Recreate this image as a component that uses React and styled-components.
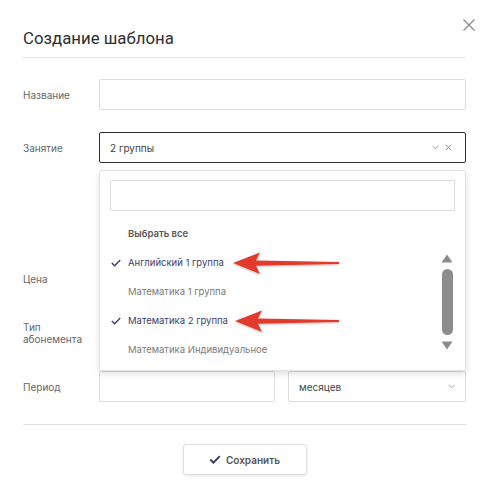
import React from "react";
import styled, { createGlobalStyle } from "styled-components";

const Global = createGlobalStyle`
  html, body { margin: 0; padding: 0; background: #fff; }
  body { font-family: Inter, "Noto Sans", "Liberation Sans", sans-serif; color: #333; }
  * { box-sizing: border-box; }
`;

const Modal = styled.div`
  position: relative;
  width: 495px;
  height: 500px;
  padding: 0 29px 0 23px;
  background: #fff;
`;

const Header = styled.div`
  padding-top: 28px;
  padding-bottom: 8px;
  border-bottom: 1px solid #e3e3e3;
`;

const Title = styled.h1`
  margin: 0;
  font-family: Roboto, "Liberation Sans", sans-serif;
  font-size: 16.8px;
  line-height: 21px;
  font-weight: 400;
  color: #2e2e2e;
`;

const Close = styled.button`
  position: absolute;
  top: 18px;
  right: 19px;
  width: 14px;
  height: 14px;
  padding: 0;
  border: 0;
  background: none;
  display: flex;
`;

const Form = styled.div`
  padding-top: 21px;
`;

const Row = styled.div`
  display: grid;
  grid-template-columns: 76px 1fr;
  align-items: center;
  margin-top: ${(p) => p.$mt || 0}px;
`;

const Label = styled.div`
  font-size: 10px;
  line-height: 12px;
  color: #666;
  padding-right: 14px;
`;

const Input = styled.div`
  height: 31px;
  border: 1px solid #dcdcdc;
  border-radius: 2px;
  background: #fff;
`;

const Select = styled.div`
  position: relative;
  height: 31px;
  border: 1px solid ${(p) => (p.$active ? "#2f2f36" : "#dcdcdc")};
  border-radius: 2px;
  display: flex;
  align-items: center;
  padding: 0 ${(p) => (p.$active ? 13 : 10)}px 0 10px;
  font-size: 10px;
  color: #444;
  background: #fff;
`;

const SelectText = styled.span`
  flex: 1;
`;

const Icons = styled.span`
  display: flex;
  align-items: center;
  gap: 6px;
`;

const Pair = styled.div`
  display: grid;
  grid-template-columns: 176px 1fr;
  gap: 13px;
`;

const Dropdown = styled.div`
  position: absolute;
  z-index: 5;
  top: 37px;
  left: -1px;
  right: -1px;
  height: 201px;
  background: #fff;
  border: 1px solid #e2e2e2;
  border-radius: 2px;
  box-shadow: 0 3px 6px rgba(0, 0, 0, 0.12);
  padding: 9px 10px 0 10px;
`;

const Search = styled.div`
  height: 31px;
  border: 1px solid #dcdcdc;
  border-radius: 1px;
`;

const AllRow = styled.div`
  height: 29px;
  margin-top: 8px;
  padding-left: 18px;
  display: flex;
  align-items: center;
  font-size: 9.5px;
  font-weight: 600;
  color: #555;
`;

const ListWrap = styled.div`
  display: flex;
`;

const Options = styled.div`
  flex: 1;
`;

const Option = styled.div`
  height: 29px;
  display: flex;
  align-items: center;
  font-size: 9.5px;
  color: ${(p) => (p.$on ? "#3b3e6c" : "#7b7b7b")};
`;

const CheckSlot = styled.span`
  width: 18px;
  display: flex;
  align-items: center;
  padding-left: 1px;
`;

const Scroll = styled.div`
  width: 14px;
  margin-right: 1px;
  padding: 6px 0;
  display: flex;
  flex-direction: column;
  align-items: center;
  gap: 6px;
`;

const Thumb = styled.div`
  width: 11px;
  height: 66px;
  border-radius: 6px;
  background: #8c8c8c;
`;

const Arrows = styled.svg`
  position: absolute;
  z-index: 6;
  left: 0;
  top: 0;
  pointer-events: none;
`;

const Divider = styled.div`
  margin-top: 22px;
  border-top: 1px solid #e3e3e3;
`;

const Footer = styled.div`
  display: flex;
  justify-content: center;
  padding-top: 19px;
`;

const SaveButton = styled.button`
  width: 124px;
  height: 31px;
  border: 1px solid #e0e0e0;
  border-radius: 3px;
  background: #fff;
  box-shadow: 0 1px 3px rgba(0, 0, 0, 0.1);
  display: flex;
  align-items: center;
  justify-content: center;
  gap: 5px;
  font-family: inherit;
  font-size: 10px;
  font-weight: 600;
  color: #555;
  padding: 0;
`;

const Chevron = () => (
  <svg width="7" height="5" viewBox="0 0 7 5">
    <path d="M0.5 0.8 L3.5 3.8 L6.5 0.8" fill="none" stroke="#9a9a9a" strokeWidth="0.9" />
  </svg>
);

const SmallX = () => (
  <svg width="7" height="7" viewBox="0 0 7 7">
    <path d="M0.8 0.8 L6.2 6.2 M6.2 0.8 L0.8 6.2" fill="none" stroke="#8a8a8a" strokeWidth="0.9" />
  </svg>
);

const Check = ({ w = 10, h = 8, c = "#3b3e6c", sw = 1.4 }) => (
  <svg width={w} height={h} viewBox="0 0 10 8">
    <path d="M0.8 4 L3.6 6.8 L9.2 1" fill="none" stroke={c} strokeWidth={sw} />
  </svg>
);

const Tri = ({ up }) => (
  <svg width="12" height="9" viewBox="0 0 12 9">
    <path d={up ? "M6 0.5 L11.5 8.5 L0.5 8.5 Z" : "M0.5 0.5 L11.5 0.5 L6 8.5 Z"} fill="#8c8c8c" />
  </svg>
);

const RedArrow = ({ tip, y, end }) => (
  <path
    d={`M${tip} ${y} L${tip + 27} ${y - 10.5} L${tip + 23} ${y - 2.4} L${end} ${y - 1.1} L${end} ${y + 1.1} L${tip + 23} ${y + 2.8} L${tip + 27} ${y + 11} Z`}
    fill="#e23b2e"
    filter="url(#sh)"
  />
);

const options = [
  { t: "Английский 1 группа", on: true },
  { t: "Математика 1 группа", on: false },
  { t: "Математика 2 группа", on: true },
  { t: "Математика Индивидуальное", on: false },
];

export default function App() {
  return (
    <>
      <Global />
      <Modal>
        <Close aria-label="close">
          <svg width="14" height="14" viewBox="0 0 14 14">
            <path d="M1.5 1.5 L12.5 12.5 M12.5 1.5 L1.5 12.5" stroke="#8d8d8d" strokeWidth="1.3" fill="none" />
          </svg>
        </Close>
        <Header>
          <Title>Создание шаблона</Title>
        </Header>
        <Form>
          <Row>
            <Label>Название</Label>
            <Input />
          </Row>
          <Row $mt={22}>
            <Label>Занятие</Label>
            <Select $active>
              <SelectText>2 группы</SelectText>
              <Icons>
                <Chevron />
                <SmallX />
              </Icons>
              <Dropdown>
                <Search />
                <AllRow>Выбрать все</AllRow>
                <ListWrap>
                  <Options>
                    {options.map((o) => (
                      <Option key={o.t} $on={o.on}>
                        <CheckSlot>{o.on && <Check />}</CheckSlot>
                        {o.t}
                      </Option>
                    ))}
                  </Options>
                  <Scroll>
                    <Tri up />
                    <Thumb />
                    <Tri />
                  </Scroll>
                </ListWrap>
              </Dropdown>
            </Select>
          </Row>
          <Row $mt={100}>
            <Label>Цена</Label>
            <Input />
          </Row>
          <Row $mt={23}>
            <Label>Тип абонемента</Label>
            <Select>
              <SelectText />
            </Select>
          </Row>
          <Row $mt={23}>
            <Label>Период</Label>
            <Pair>
              <Input />
              <Select>
                <SelectText>месяцев</SelectText>
                <Chevron />
              </Select>
            </Pair>
          </Row>
        </Form>
        <Divider />
        <Footer>
          <SaveButton>
            <Check w={12} h={9} sw={1.8} />
            Сохранить
          </SaveButton>
        </Footer>
        <Arrows width="495" height="500" viewBox="0 0 495 500">
          <defs>
            <filter id="sh" x="-10%" y="-50%" width="120%" height="200%">
              <feDropShadow dx="0" dy="1" stdDeviation="1" floodColor="#000" floodOpacity="0.25" />
            </filter>
          </defs>
          <RedArrow tip={233} y={263} end={339} />
          <RedArrow tip={235} y={321} end={339} />
        </Arrows>
      </Modal>
    </>
  );
}
